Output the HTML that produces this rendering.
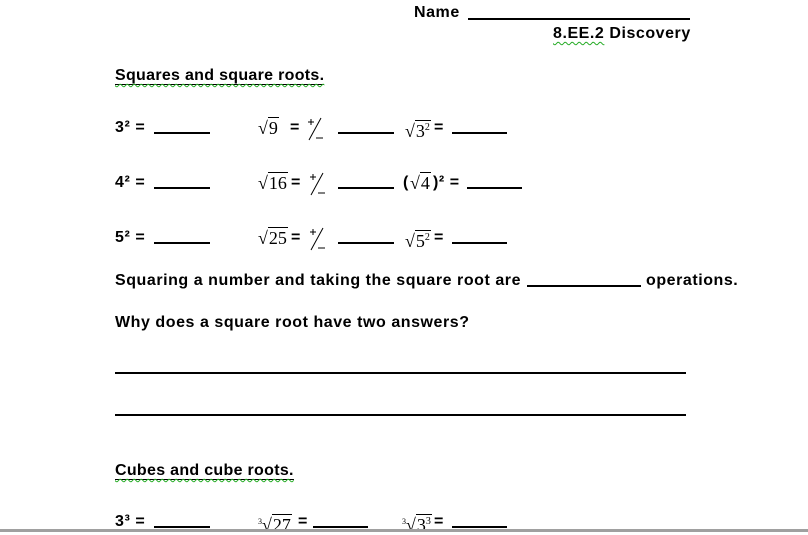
<html><head><style>
body{margin:0;width:808px;height:532px;background:#fff;position:relative;overflow:hidden}
.t{position:absolute;font:bold 16px "Liberation Sans",sans-serif;letter-spacing:0.55px;line-height:18px;color:#000;white-space:nowrap}
.s{position:absolute;font:18px "Liberation Serif",serif;line-height:18px;white-space:nowrap}
.r{border-top:1px solid #000;padding:0 1px}
.b{position:absolute;height:0;border-bottom:2px solid #000}
.w{text-decoration:underline wavy #2a2;text-decoration-thickness:1px;text-underline-offset:3px}
.h{position:absolute;font:bold 16px "Liberation Sans",sans-serif;letter-spacing:0.3px;line-height:18px;white-space:nowrap}
.h span{border-bottom:1.5px solid #000}
sup{font-size:10px}
.pm{position:absolute;width:22px;height:26px}
</style></head><body>
<div class="t" style="left:414px;top:4px">Name</div>
<div class="b" style="left:468px;top:18px;width:222px"></div>
<div class="t" style="left:553px;top:25px"><span class="w">8.EE.2</span> Discovery</div>
<div class="h" style="left:115px;top:67px"><span class="w">Squares and square roots.</span></div>

<div class="t" style="left:115px;top:119px">3² =</div><div class="b" style="left:154px;top:132px;width:56px"></div>
<div class="s" style="left:258px;top:119px">√<span class="r">9</span></div><div class="t" style="left:290px;top:119px">=</div>
<svg class="pm" style="left:305px;top:116px" viewBox="0 0 22 26"><path d="M3 6h6M6 3v6M16 2L4 24M11 22h7" stroke="#000" fill="none" stroke-width="1"/></svg>
<div class="b" style="left:338px;top:132px;width:56px"></div>
<div class="s" style="left:405px;top:119px">√<span class="r">3<sup>2</sup></span></div><div class="t" style="left:434px;top:119px">=</div><div class="b" style="left:452px;top:132px;width:55px"></div>

<div class="t" style="left:115px;top:174px">4² =</div><div class="b" style="left:154px;top:187px;width:56px"></div>
<div class="s" style="left:258px;top:174px">√<span class="r">16</span></div><div class="t" style="left:291px;top:174px">=</div>
<svg class="pm" style="left:307px;top:171px" viewBox="0 0 22 26"><path d="M3 6h6M6 3v6M16 2L4 24M11 22h7" stroke="#000" fill="none" stroke-width="1"/></svg>
<div class="b" style="left:338px;top:187px;width:56px"></div>
<div class="t" style="left:403px;top:174px">(</div><div class="s" style="left:410px;top:174px">√<span class="r">4</span></div><div class="t" style="left:433px;top:174px">)² =</div><div class="b" style="left:467px;top:187px;width:55px"></div>

<div class="t" style="left:115px;top:229px">5² =</div><div class="b" style="left:154px;top:242px;width:56px"></div>
<div class="s" style="left:258px;top:229px">√<span class="r">25</span></div><div class="t" style="left:291px;top:229px">=</div>
<svg class="pm" style="left:307px;top:226px" viewBox="0 0 22 26"><path d="M3 6h6M6 3v6M16 2L4 24M11 22h7" stroke="#000" fill="none" stroke-width="1"/></svg>
<div class="b" style="left:338px;top:242px;width:56px"></div>
<div class="s" style="left:405px;top:229px">√<span class="r">5<sup>2</sup></span></div><div class="t" style="left:434px;top:229px">=</div><div class="b" style="left:452px;top:242px;width:55px"></div>

<div class="t" style="left:115px;top:272px">Squaring a number and taking the square root are</div>
<div class="b" style="left:527px;top:285px;width:114px"></div>
<div class="t" style="left:646px;top:272px">operations.</div>
<div class="t" style="left:115px;top:314px">Why does a square root have two answers?</div>
<div class="b" style="left:115px;top:372px;width:571px"></div>
<div class="b" style="left:115px;top:414px;width:571px"></div>

<div class="h" style="left:115px;top:462px"><span class="w">Cubes and cube roots.</span></div>
<div class="t" style="left:115px;top:513px">3³ =</div><div class="b" style="left:154px;top:526px;width:56px"></div>
<div class="s" style="left:258px;top:513px"><sup style="font-size:8px">3</sup>√<span class="r">27</span></div><div class="t" style="left:298px;top:513px">=</div><div class="b" style="left:313px;top:526px;width:55px"></div>
<div class="s" style="left:402px;top:513px"><sup style="font-size:8px">3</sup>√<span class="r">3<sup>3</sup></span></div><div class="t" style="left:434px;top:513px">=</div><div class="b" style="left:452px;top:526px;width:55px"></div>
<div style="position:absolute;left:0;top:529px;width:808px;height:3px;background:#a0a0a0"></div>
</body></html>
